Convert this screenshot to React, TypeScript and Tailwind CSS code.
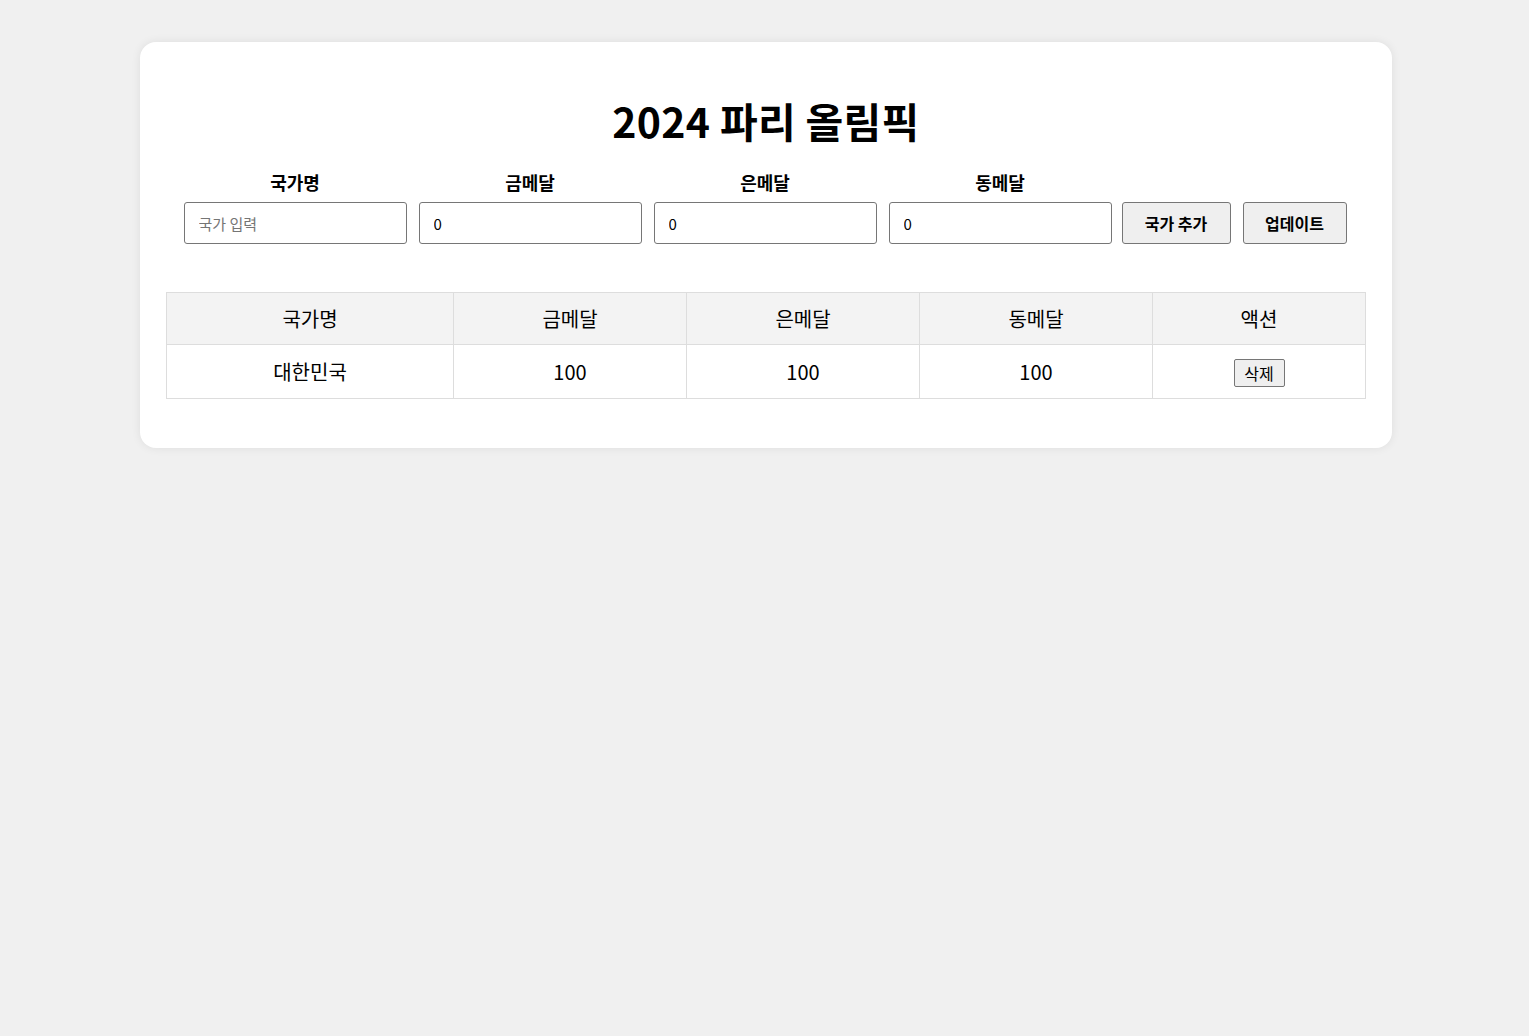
const font = {
  fontFamily: '"Noto Sans CJK KR", "Noto Sans", sans-serif',
};

const fields = [
  { label: "국가명", placeholder: "국가 입력", value: "" },
  { label: "금메달", placeholder: "", value: "0" },
  { label: "은메달", placeholder: "", value: "0" },
  { label: "동메달", placeholder: "", value: "0" },
];

const rows = [{ country: "대한민국", gold: 100, silver: 100, bronze: 100 }];

export default function App() {
  return (
    <div className="min-h-screen bg-[#f0f0f0] pt-[42px]" style={font}>
      <div className="ml-[140px] w-[1252px] rounded-2xl bg-white px-[26px] pb-[49px] pt-[38px] shadow-[0_0_10px_rgba(0,0,0,0.08)]">
        {/* title */}
        <h1 className="text-center text-[41px] font-bold leading-[80px] tracking-[0.3px] text-black">
          2024 파리 올림픽
        </h1>

        {/* form */}
        <div className="mr-[2px] mt-[9px] flex items-end justify-center gap-3">
          {fields.map((f) => (
            <div key={f.label} className="flex w-[223px] flex-col items-center">
              <label className="mb-[7px] text-[18px] font-bold leading-[26px] text-black">
                {f.label}
              </label>
              <input
                className="h-[42px] w-full rounded-[3px] border border-[#767676] px-[14px] text-[15px] text-black placeholder:text-[#757575] outline-none"
                placeholder={f.placeholder}
                defaultValue={f.value}
              />
            </div>
          ))}
          <button className="ml-[-2px] h-[42px] w-[109px] rounded-[3px] border border-[#767676] bg-[#efefef] text-[16px] font-semibold text-black">
            국가 추가
          </button>
          <button className="h-[42px] w-[104px] rounded-[3px] border border-[#767676] bg-[#efefef] text-[16px] font-semibold text-black">
            업데이트
          </button>
        </div>

        {/* table */}
        <table className="mt-[48px] w-full border-collapse text-[20px] text-black">
          <thead>
            <tr className="bg-[#f3f3f3]">
              <th className="h-[52px] w-[287px] border border-[#dddddd] font-normal">
                국가명
              </th>
              <th className="w-[233px] border border-[#dddddd] font-normal">금메달</th>
              <th className="w-[233px] border border-[#dddddd] font-normal">은메달</th>
              <th className="w-[233px] border border-[#dddddd] font-normal">동메달</th>
              <th className="border border-[#dddddd] font-normal">액션</th>
            </tr>
          </thead>
          <tbody>
            {rows.map((r) => (
              <tr key={r.country}>
                <td className="h-[54px] border border-[#dddddd] text-center">{r.country}</td>
                <td className="border border-[#dddddd] text-center">{r.gold}</td>
                <td className="border border-[#dddddd] text-center">{r.silver}</td>
                <td className="border border-[#dddddd] text-center">{r.bronze}</td>
                <td className="border border-[#dddddd] text-center">
                  <button className="h-[28px] w-[51px] rounded-[2px] border border-[#767676] bg-[#efefef] text-[16px] leading-none">
                    삭제
                  </button>
                </td>
              </tr>
            ))}
          </tbody>
        </table>
      </div>
    </div>
  );
}
